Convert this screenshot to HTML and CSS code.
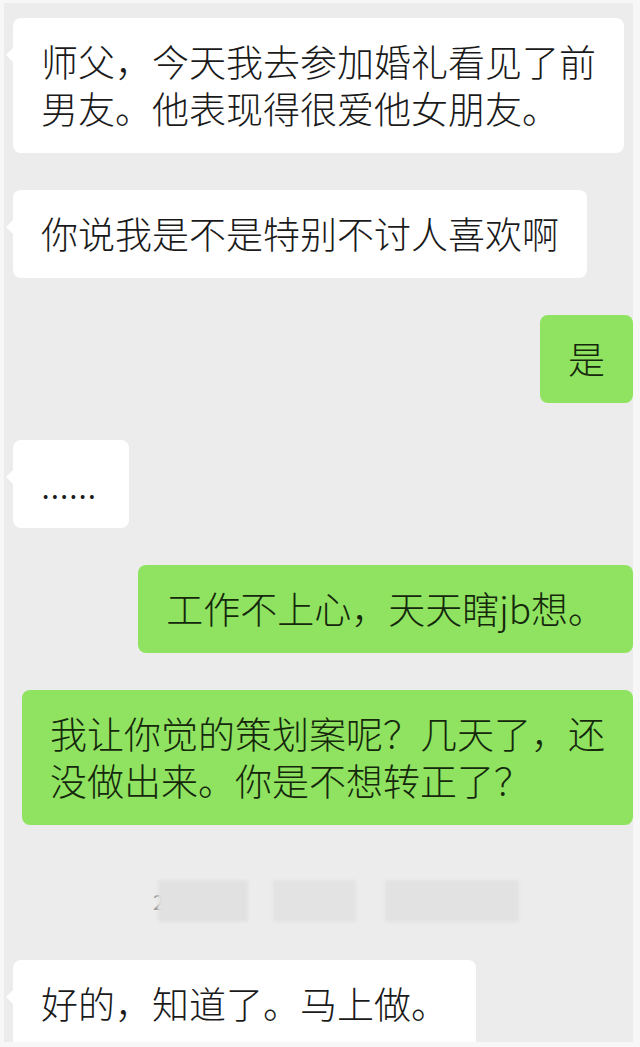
FILE: index.html
```html
<!DOCTYPE html>
<html lang="zh-CN">
<head>
<meta charset="UTF-8">
<meta name="viewport" content="width=device-width, initial-scale=1.0">
<title>聊天记录</title>
<link rel="stylesheet" href="styles.css">
</head>
<body>

<div class="chat">
    <div class="row them">
        <div class="bubble">师父，今天我去参加婚礼看见了前<br>男友。他表现得很爱他女朋友。</div>
    </div>
    <div class="row them">
        <div class="bubble">你说我是不是特别不讨人喜欢啊</div>
    </div>
    <div class="row me">
        <div class="bubble">是</div>
    </div>
    <div class="row them">
        <div class="bubble dots">......</div>
    </div>
    <div class="row me">
        <div class="bubble">工作不上心，天天瞎jb想。</div>
    </div>
    <div class="row me">
        <div class="bubble">我让你觉的策划案呢？几天了，还<br>没做出来。你是不想转正了？</div>
    </div>

    <!-- 时间被打码了 -->
    <div class="time">
        <span class="time-digit">2</span>
        <span class="blur b1"></span>
        <span class="blur b2"></span>
        <span class="blur b3"></span>
    </div>

    <div class="row them last">
        <div class="bubble">好的，知道了。马上做。</div>
    </div>
</div>

</body>
</html>
```

FILE: styles.css
```css
body {
    margin: 0;
    background-color: #f7f7f7;
    font-family: "Noto Sans CJK SC", "Noto Sans", sans-serif;
}

.chat {
    margin: 3px 7px 0 4px;
    height: 1039px;
    overflow: hidden;
    background-color: #ececec;
    padding: 15px 0 0 9px;
    box-sizing: border-box;
    display: flex;
    flex-direction: column;
}

.row {
    display: flex;
    margin-bottom: 37px;
}

.row.them {
    justify-content: flex-start;
}

.row.me {
    justify-content: flex-end;
}

.bubble {
    position: relative;
    font-size: 37px;
    font-weight: 300;
    line-height: 47px;
    padding: 20px 28px 21px 28px;
    border-radius: 8px;
    white-space: nowrap;
    background-color: #fff;
    color: #1a1a1a;
}

/* 小尖角 */
.them .bubble::before {
    content: "";
    position: absolute;
    left: -7px;
    top: 30px;
    border-top: 7px solid transparent;
    border-bottom: 7px solid transparent;
    border-right: 7px solid #fff;
}

.me .bubble {
    background-color: #8fe360;
    color: #15280c;
}

.me .bubble::after {
    content: "";
    position: absolute;
    right: -6px;
    top: 32px;
    border-top: 6px solid transparent;
    border-bottom: 6px solid transparent;
    border-left: 6px solid #8fe360;
}

.dots {
    padding-right: 32px;
}

.time {
    display: flex;
    align-items: center;
    height: 42px;
    margin: 18px 0 38px 140px;
}

.time-digit {
    font-size: 20px;
    color: #9a9a9a;
}

.blur {
    position: relative;
    height: 42px;
    background-color: #e1e1e1;
    filter: blur(1.5px);
}

.b1 {
    width: 90px;
    margin-left: -6px;
    opacity: 0.95;
}

.b2 {
    width: 83px;
    margin-left: 25px;
    background-color: #e3e3e3;
}

.b3 {
    width: 134px;
    margin-left: 29px;
    background-color: #e2e2e2;
}

.last {
    margin-bottom: 0;
}
```
